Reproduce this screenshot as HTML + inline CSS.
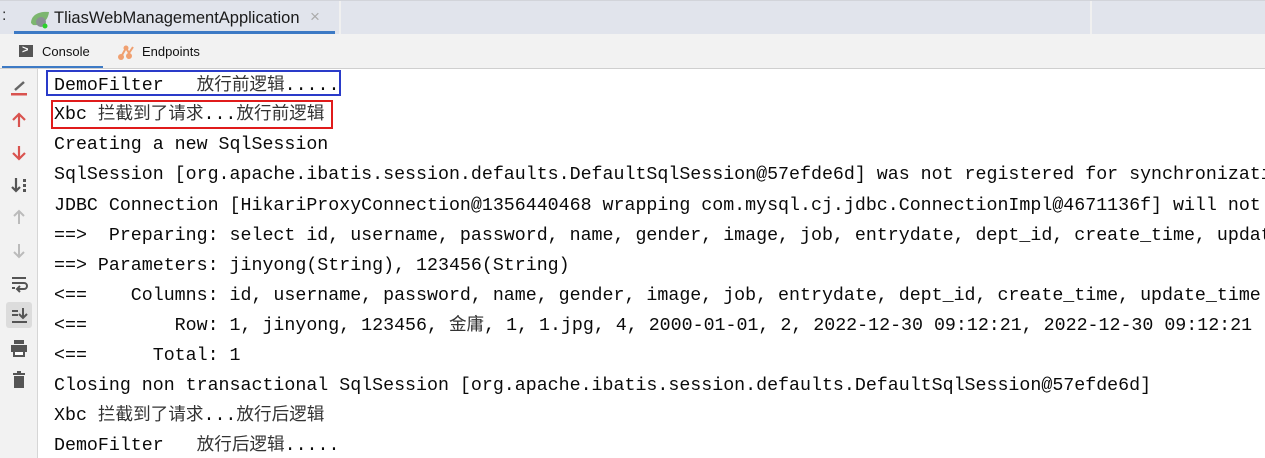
<!DOCTYPE html>
<html><head><meta charset="utf-8"><style>
body{margin:0;width:1265px;height:458px;overflow:hidden;background:#fff;font-family:"Liberation Sans",sans-serif;position:relative}
.top{position:absolute;left:0;top:0;width:1265px;height:34px;background:#e1e4ec;border-top:1px solid #d2d4da;box-sizing:border-box}
.tab{position:absolute;left:14px;top:0;width:321px;height:33px;border-bottom:3px solid #3d7ac5;box-sizing:border-box}
.title{position:absolute;left:54px;top:8px;font-size:16.5px;color:#1a1a1a}
.bar2{position:absolute;left:0;top:34px;width:1265px;height:35px;background:#f2f2f2;border-bottom:1px solid #cfcfcf;box-sizing:border-box}
.side{position:absolute;left:0;top:69px;width:37px;height:389px;background:#f2f2f2;border-right:1px solid #d6d6d6}
.ic{position:absolute;left:9px;width:20px;height:20px}
.con{position:absolute;left:0;top:2px;width:1265px;height:456px;overflow:hidden;font-family:"Liberation Mono",monospace;font-size:18.3px;color:#0a0a0a;white-space:pre}
.ln{position:absolute;left:54px;height:30px;line-height:30px}
.c{font-family:"Noto Sans CJK SC",sans-serif;font-size:17.6px;color:#333;line-height:1}
</style></head><body>
<div class="top">
 <div style="position:absolute;left:2px;top:6px;font-size:16px;color:#333">:</div>
 <div class="tab"></div>
 <svg style="position:absolute;left:29px;top:8px" width="22" height="20"><path d="M2 14 C2 6 10 2 20 3 C19 12 12 17 4 16Z" fill="#7cb66f"/><circle cx="12" cy="13" r="5" fill="#8a8f95"/><circle cx="16" cy="17" r="2.5" fill="#2bd12b"/></svg>
 <div class="title">TliasWebManagementApplication</div>
 <div style="position:absolute;left:310px;top:6px;font-size:17px;color:#aaa">×</div>
 <div style="position:absolute;left:339px;top:0;width:2px;height:34px;background:#f0f0f0"></div>
 <div style="position:absolute;left:1090px;top:0;width:2px;height:34px;background:#f0f0f0"></div>
</div>
<div class="bar2">
 <div style="position:absolute;left:19px;top:11px;width:14px;height:12px;background:#555"></div>
 <div style="position:absolute;left:22px;top:10px;color:#fff;font-size:11px;font-weight:bold">&gt;</div>
 <div style="position:absolute;left:42px;top:10px;font-size:13px;color:#111">Console</div>
 <div style="position:absolute;left:2px;top:32px;width:101px;height:2px;background:#3d7ac5"></div>
 <svg style="position:absolute;left:117px;top:9px" width="20" height="18"><path d="M4 14 L9 5 L12 10 L16 4" stroke="#f0a070" stroke-width="2" fill="none"/><circle cx="4" cy="14" r="3" fill="#f0a070"/><circle cx="12" cy="13" r="3" fill="#f0a070"/><circle cx="9" cy="5" r="2.5" fill="#f0a070"/></svg>
 <div style="position:absolute;left:142px;top:10px;font-size:13px;color:#111">Endpoints</div>
</div>
<div class="side">
 <svg class="ic" style="top:9px" viewBox="0 0 20 20"><path d="M6 12 L15 4" stroke="#666" stroke-width="2.5"/><rect x="2" y="15" width="16" height="2.5" fill="#d9534f"/></svg>
 <svg class="ic" style="top:41px" viewBox="0 0 20 20"><path d="M10 17V4M4 10l6-6 6 6" stroke="#d9534f" stroke-width="2.2" fill="none"/></svg>
 <svg class="ic" style="top:74px" viewBox="0 0 20 20"><path d="M10 3v13M4 10l6 6 6-6" stroke="#d9534f" stroke-width="2.2" fill="none"/></svg>
 <svg class="ic" style="top:106px" viewBox="0 0 20 20"><path d="M7 3v13M3 12l4 4 4-4" stroke="#555" stroke-width="2.2" fill="none"/><rect x="14" y="4" width="3" height="3" fill="#555"/><rect x="14" y="9" width="3" height="3" fill="#555"/><rect x="14" y="14" width="3" height="3" fill="#555"/></svg>
 <svg class="ic" style="top:138px" viewBox="0 0 20 20"><path d="M10 17V4M5 9l5-5 5 5" stroke="#bbb" stroke-width="2" fill="none"/></svg>
 <svg class="ic" style="top:172px" viewBox="0 0 20 20"><path d="M10 3v13M5 11l5 5 5-5" stroke="#bbb" stroke-width="2" fill="none"/></svg>
 <svg class="ic" style="top:204px" viewBox="0 0 20 20"><path d="M3 5h14M3 10h12a3 3 0 010 6H9M11 13l-3 3 3 3" stroke="#555" stroke-width="2" fill="none"/><rect x="3" y="14" width="3" height="2" fill="#555"/></svg>
 <div style="position:absolute;left:6px;top:233px;width:26px;height:26px;background:#dcdcdc;border-radius:3px"></div>
 <svg class="ic" style="top:236px" viewBox="0 0 20 20"><path d="M3 6h6M3 10h6M3 17h15M14 3v10M10 9l4 4 4-4" stroke="#555" stroke-width="2" fill="none"/></svg>
 <svg class="ic" style="top:269px" viewBox="0 0 20 20"><rect x="5" y="2" width="10" height="4" fill="#555"/><rect x="2" y="7" width="16" height="7" fill="#555"/><rect x="5" y="13" width="10" height="5" fill="#fff" stroke="#555" stroke-width="2"/></svg>
 <svg class="ic" style="top:301px" viewBox="0 0 20 20"><rect x="4" y="3" width="12" height="2" fill="#555"/><rect x="8" y="1" width="4" height="2" fill="#555"/><rect x="5" y="6" width="10" height="12" fill="#555"/></svg>
</div>
<div style="position:absolute;left:46px;top:70px;width:291px;height:22px;border:2px solid #2a3bc9"></div>
<div style="position:absolute;left:51px;top:100px;width:278px;height:25px;border:2px solid #e01b1b"></div>
<div class="con">
<div class="ln" style="top:69px">DemoFilter   <span class="c">放行前逻辑</span>.....</div>
<div class="ln" style="top:98px">Xbc <span class="c">拦截到了请求</span>...<span class="c">放行前逻辑</span></div>
<div class="ln" style="top:128px">Creating a new SqlSession</div>
<div class="ln" style="top:158px">SqlSession [org.apache.ibatis.session.defaults.DefaultSqlSession@57efde6d] was not registered for synchronization</div>
<div class="ln" style="top:189px">JDBC Connection [HikariProxyConnection@1356440468 wrapping com.mysql.cj.jdbc.ConnectionImpl@4671136f] will not</div>
<div class="ln" style="top:219px">==>  Preparing: select id, username, password, name, gender, image, job, entrydate, dept_id, create_time, update_time</div>
<div class="ln" style="top:249px">==> Parameters: jinyong(String), 123456(String)</div>
<div class="ln" style="top:279px">&lt;==    Columns: id, username, password, name, gender, image, job, entrydate, dept_id, create_time, update_time</div>
<div class="ln" style="top:309px">&lt;==        Row: 1, jinyong, 123456, <span class="c">金庸</span>, 1, 1.jpg, 4, 2000-01-01, 2, 2022-12-30 09:12:21, 2022-12-30 09:12:21</div>
<div class="ln" style="top:339px">&lt;==      Total: 1</div>
<div class="ln" style="top:369px">Closing non transactional SqlSession [org.apache.ibatis.session.defaults.DefaultSqlSession@57efde6d]</div>
<div class="ln" style="top:399px">Xbc <span class="c">拦截到了请求</span>...<span class="c">放行后逻辑</span></div>
<div class="ln" style="top:429px">DemoFilter   <span class="c">放行后逻辑</span>.....</div>
</div>
</body></html>
